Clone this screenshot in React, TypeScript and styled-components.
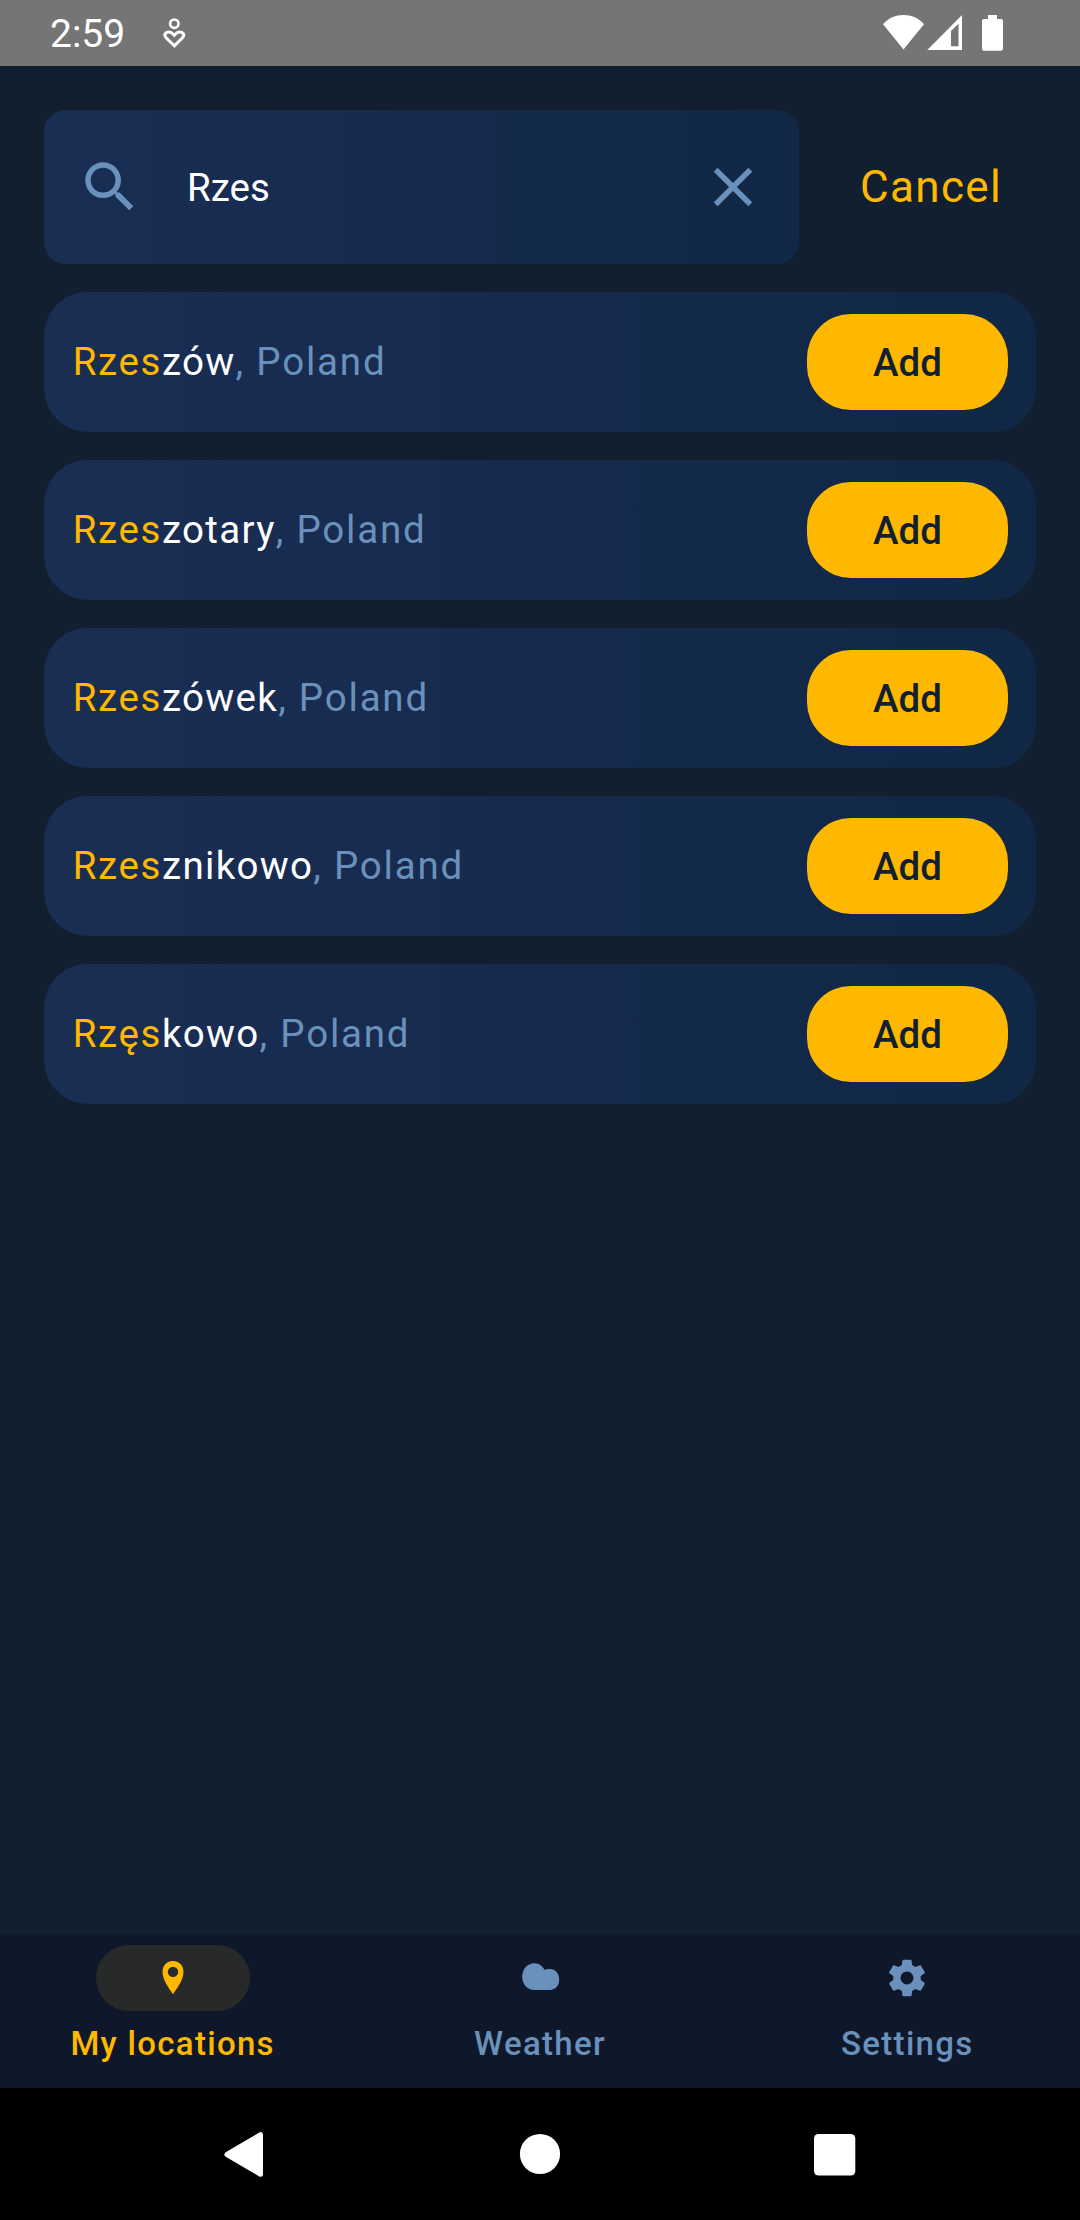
import React from 'react';
import styled, { createGlobalStyle } from 'styled-components';

const GlobalStyle = createGlobalStyle`
  * { box-sizing: border-box; }
  body { margin: 0; background: #121f31; font-family: Roboto, "Noto Sans", sans-serif; }
  button { font: inherit; border: 0; margin: 0; padding: 0; background: none; color: inherit; }
`;

const color = {
  accent: '#ffb800',
  muted: '#6a91bc',
  ink: '#121f31',
  surface: 'linear-gradient(90deg, #1a2e54, #102745)',
};

const Screen = styled.div`
  width: 1080px;
  height: 2220px;
  display: flex;
  flex-direction: column;
  background: ${color.ink};
  overflow: hidden;
`;

const StatusBar = styled.header`
  height: 66px;
  flex: none;
  display: flex;
  align-items: center;
  background: #757575;
  color: #fff;
  padding: 0 73px 0 50px;
`;

const Clock = styled.time`
  width: 105px;
  font-size: 39px;
  line-height: 66px;
  padding-top: 2px;
`;

const StatusIcons = styled.div`
  display: flex;
  margin-left: auto;
`;

const Content = styled.main`
  flex: 1;
  padding: 44px 44px 0;
`;

const SearchRow = styled.div`
  display: flex;
  height: 154px;
  margin-bottom: 28px;
`;

const SearchBox = styled.div`
  width: 755px;
  display: flex;
  align-items: center;
  padding: 0 33px;
  border-radius: 22px;
  background: ${color.surface};
`;

const Input = styled.input`
  flex: 1;
  min-width: 0;
  margin-left: 44px;
  padding: 1px 0 0;
  border: 0;
  outline: 0;
  background: none;
  color: #fff;
  font: 400 38.5px/54px Roboto, "Noto Sans", sans-serif;
`;

const IconButton = styled.button`
  display: flex;
`;

const Cancel = styled.button`
  flex: 1;
  padding-left: 27px;
  color: ${color.accent};
  font-size: 44px;
  letter-spacing: 1.375px;
`;

const Results = styled.ul`
  list-style: none;
  margin: 0;
  padding: 0;
  display: grid;
  gap: 28px;
`;

const Result = styled.li`
  height: 140px;
  display: flex;
  align-items: center;
  justify-content: space-between;
  padding: 0 28px 0 28.8px;
  border-radius: 44px;
  background: ${color.surface};
`;

const Place = styled.span`
  padding-bottom: 2px;
  color: ${color.muted};
  font-size: 38.5px;
  letter-spacing: 1.8px;
  white-space: pre;
`;

const Match = styled.span`
  color: ${color.accent};
  letter-spacing: 1.6px;
`;

const Rest = styled.span`
  color: #fff;
  letter-spacing: 1.3px;
`;

const AddButton = styled.button`
  width: 201px;
  height: 96px;
  border-radius: 44px;
  background: ${color.accent};
  color: ${color.ink};
  font-size: 38.5px;
  font-weight: 500;
`;

const TabBar = styled.nav`
  height: 154px;
  flex: none;
  display: grid;
  grid-template-columns: repeat(3, 1fr);
  gap: 22px;
  background: #0f182a;
`;

const Tab = styled.div<{ $active?: boolean }>`
  display: flex;
  flex-direction: column;
  align-items: center;
  padding-top: 11px;
  color: ${(p) => (p.$active ? color.accent : color.muted)};
`;

const Indicator = styled.div<{ $active?: boolean }>`
  width: 154px;
  height: 66px;
  border-radius: 33px;
  display: flex;
  align-items: center;
  justify-content: center;
  background: ${(p) => (p.$active ? '#272a28' : 'transparent')};
`;

const TabLabel = styled.span`
  margin-top: 11px;
  font-size: 33px;
  font-weight: 500;
  line-height: 44px;
  letter-spacing: 1.3px;
`;

const SystemBar = styled.footer`
  height: 132px;
  flex: none;
  display: flex;
  align-items: center;
  justify-content: space-between;
  padding: 0 212px;
  background: #000;
`;

const places = [
  { match: 'Rzes', rest: 'zów' },
  { match: 'Rzes', rest: 'zotary' },
  { match: 'Rzes', rest: 'zówek' },
  { match: 'Rzes', rest: 'znikowo' },
  { match: 'Rzęs', rest: 'kowo' },
];

const HealthIcon = () => (
  <svg width="40" height="66" viewBox="155 0 40 66" fill="none" stroke="#fff">
    <circle cx="174.3" cy="23.7" r="4.2" strokeWidth="2.6" />
    <path d="M174.3 45.8L166.3 38C163 34.5 166 31.9 169 31.9C171.6 31.9 172.8 33.6 174.3 35.2C175.8 33.6 177 31.9 179.6 31.9C182.6 31.9 185.6 34.5 182.3 38Z" strokeWidth="3" />
  </svg>
);

const StatusGlyphs = () => (
  <svg width="127" height="66" viewBox="880 0 127 66" fill="#fff">
    <path d="M903.5 49.5L883 24.3C888.5 18 895.5 15 903.5 15C911.5 15 918.5 18 924 24.3Z" />
    <path fillRule="evenodd" d="M927.3 50L962 15V50ZM951 31V46.3H958.5V23.8Z" />
    <path d="M988 15H997V19H1001Q1003 19 1003 21V48.8Q1003 50.8 1001 50.8H984Q982 50.8 982 48.8V21Q982 19 984 19H988Z" />
  </svg>
);

const SearchIcon = () => (
  <svg width="66" height="66" viewBox="0 0 24 24" fill={color.muted}>
    <path d="M15.5 14h-.79l-.28-.27C15.41 12.59 16 11.11 16 9.5 16 5.91 13.09 3 9.5 3S3 5.91 3 9.5 5.91 16 9.5 16c1.61 0 3.09-.59 4.23-1.57l.27.28v.79l5 4.99L20.49 19l-4.99-5zm-6 0C7.01 14 5 11.99 5 9.5S7.01 5 9.5 5 14 7.01 14 9.5 11.99 14 9.5 14z" />
  </svg>
);

const CloseIcon = () => (
  <svg width="66" height="66" viewBox="0 0 24 24" fill={color.muted}>
    <path d="M19 6.41L17.59 5 12 10.59 6.41 5 5 6.41 10.59 12 5 17.59 6.41 19 12 13.41 17.59 19 19 17.59 13.41 12z" />
  </svg>
);

const PinIcon = () => (
  <svg width="66" height="66" viewBox="140 1945 66 66" fill="currentColor">
    <path fillRule="evenodd" d="M173 1994.3C170.5 1990 162.5 1980.5 162.5 1971.7C162.5 1965.5 167 1961 173 1961C179 1961 183.5 1965.5 183.5 1971.7C183.5 1980.5 175.5 1990 173 1994.3ZM173 1966.7A5.2 5.2 0 1 0 173 1977.1A5.2 5.2 0 1 0 173 1966.7Z" />
  </svg>
);

const CloudIcon = () => (
  <svg width="66" height="66" viewBox="507 1945 66 66" fill="currentColor">
    <path d="M534.5 1990C527.5 1990 522.2 1984 522.2 1976.7C522.2 1969 527.5 1963.2 534.5 1963.2C539 1963.2 542.6 1966 544.6 1970C546.5 1969.2 548 1969 549.8 1969C555.5 1969 559.2 1973.5 559.2 1979.6C559.2 1985.6 555.5 1990 549.8 1990Z" />
  </svg>
);

const GearIcon = () => (
  <svg width="44" height="44" viewBox="0 0 24 24" fill="currentColor">
    <path d="M19.43 12.98c.04-.32.07-.64.07-.98s-.03-.66-.07-.98l2.11-1.65c.19-.15.24-.42.12-.64l-2-3.46c-.12-.22-.39-.3-.61-.22l-2.49 1c-.52-.4-1.08-.73-1.69-.98l-.38-2.65C14.46 2.18 14.25 2 14 2h-4c-.25 0-.46.18-.49.42l-.38 2.65c-.61.25-1.17.59-1.69.98l-2.49-1c-.23-.09-.49 0-.61.22l-2 3.46c-.13.22-.07.49.12.64l2.11 1.65c-.04.32-.07.65-.07.98s.03.66.07.98l-2.11 1.65c-.19.15-.24.42-.12.64l2 3.46c.12.22.39.3.61.22l2.49-1c.52.4 1.08.73 1.69.98l.38 2.65c.03.24.24.42.49.42h4c.25 0 .46-.18.49-.42l.38-2.65c.61-.25 1.17-.59 1.69-.98l2.49 1c.23.09.49 0 .61-.22l2-3.46c.12-.22.07-.49-.12-.64l-2.11-1.65zM12 15.5c-1.93 0-3.5-1.57-3.5-3.5s1.57-3.5 3.5-3.5 3.5 1.57 3.5 3.5-1.57 3.5-3.5 3.5z" />
  </svg>
);

const BackIcon = () => (
  <svg width="66" height="66" viewBox="212 2121 66 66" fill="#fff" stroke="#fff" strokeWidth="5" strokeLinejoin="round">
    <path d="M227 2154.5L260.5 2134.7V2174.3Z" />
  </svg>
);

const HomeIcon = () => (
  <svg width="66" height="66" viewBox="0 0 66 66" fill="#fff">
    <circle cx="33" cy="33" r="20.1" />
  </svg>
);

const RecentsIcon = () => (
  <svg width="66" height="66" viewBox="802 2121 66 66" fill="#fff">
    <rect x="814" y="2134" width="41.3" height="41.5" rx="4.5" />
  </svg>
);

const tabs = [
  { label: 'My locations', Icon: PinIcon, active: true },
  { label: 'Weather', Icon: CloudIcon, active: false },
  { label: 'Settings', Icon: GearIcon, active: false },
];

export default function App() {
  return (
    <>
      <GlobalStyle />
      <Screen>
        <StatusBar>
          <Clock>2:59</Clock>
          <HealthIcon />
          <StatusIcons>
            <StatusGlyphs />
          </StatusIcons>
        </StatusBar>
        <Content>
          <SearchRow>
            <SearchBox>
              <SearchIcon />
              <Input defaultValue="Rzes" aria-label="Search" spellCheck={false} />
              <IconButton aria-label="Clear">
                <CloseIcon />
              </IconButton>
            </SearchBox>
            <Cancel>Cancel</Cancel>
          </SearchRow>
          <Results>
            {places.map((p) => (
              <Result key={p.match + p.rest}>
                <Place>
                  <Match>{p.match}</Match>
                  <Rest>{p.rest}</Rest>, Poland
                </Place>
                <AddButton>Add</AddButton>
              </Result>
            ))}
          </Results>
        </Content>
        <TabBar>
          {tabs.map(({ label, Icon, active }) => (
            <Tab key={label} $active={active}>
              <Indicator $active={active}>
                <Icon />
              </Indicator>
              <TabLabel>{label}</TabLabel>
            </Tab>
          ))}
        </TabBar>
        <SystemBar>
          <BackIcon />
          <HomeIcon />
          <RecentsIcon />
        </SystemBar>
      </Screen>
    </>
  );
}
